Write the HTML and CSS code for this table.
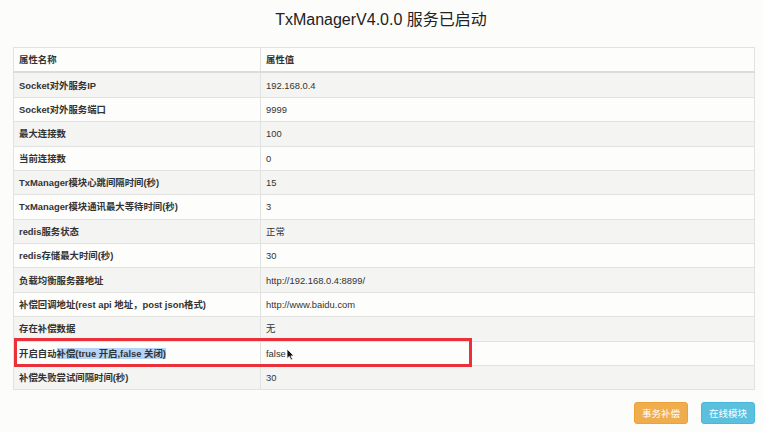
FILE: index.html
```html
<!DOCTYPE html>
<html lang="zh-CN">
<head>
    <meta charset="UTF-8">
    <title>TxManager</title>
    <link rel="stylesheet" href="styles.css">
</head>
<body>
    <h2 class="title">TxManagerV4.0.0 服务已启动</h2>
    <div class="wrap">
        <table class="info">
            <colgroup>
                <col class="col-name">
                <col>
            </colgroup>
            <thead>
                <tr><th>属性名称</th><th>属性值</th></tr>
            </thead>
            <tbody>
                <tr><th>Socket对外服务IP</th><td>192.168.0.4</td></tr>
                <tr><th>Socket对外服务端口</th><td>9999</td></tr>
                <tr><th>最大连接数</th><td>100</td></tr>
                <tr><th>当前连接数</th><td>0</td></tr>
                <tr><th>TxManager模块心跳间隔时间(秒)</th><td>15</td></tr>
                <tr><th>TxManager模块通讯最大等待时间(秒)</th><td>3</td></tr>
                <tr><th>redis服务状态</th><td>正常</td></tr>
                <tr><th>redis存储最大时间(秒)</th><td>30</td></tr>
                <tr><th>负载均衡服务器地址</th><td>http://192.168.0.4:8899/</td></tr>
                <tr><th>补偿回调地址(rest api 地址，post json格式)</th><td>http://www.baidu.com</td></tr>
                <tr><th>存在补偿数据</th><td>无</td></tr>
                <tr><th>开启自动<span class="sel">补偿(true 开启,false 关闭)</span></th><td>false</td></tr>
                <tr><th>补偿失败尝试间隔时间(秒)</th><td>30</td></tr>
            </tbody>
        </table>
        <div class="mark"></div>
        <svg class="cursor" width="9" height="13" viewBox="0 0 9 13">
            <path d="M1 1 L1 10.5 L3.3 8.5 L5 12 L6.6 11.3 L4.9 7.9 L8 7.9 Z" fill="#111" stroke="#fff" stroke-width="0.8"/>
        </svg>
    </div>
    <div class="actions">
        <button class="btn btn-warning">事务补偿</button>
        <button class="btn btn-info">在线模块</button>
    </div>
</body>
</html>
```

FILE: styles.css
```css
body {
    margin: 0;
    background: #fcfcfa;
    font-family: "Liberation Sans", Arial, "Noto Sans CJK SC", sans-serif;
    color: #333;
}
.title {
    margin: 0;
    padding: 10px 0 0;
    height: 37px;
    box-sizing: border-box;
    text-align: center;
    font-size: 16px;
    line-height: 20px;
    font-weight: normal;
    color: #222;
}
.wrap {
    position: relative;
    margin: 10px 7px 0 13px;
}
.info {
    width: 100%;
    table-layout: fixed;
    border-collapse: collapse;
    background: #fdfdfb;
    border: 1px solid #e2e2e0;
    font-size: 9.4px;
    line-height: 13px;
}
.col-name {
    width: 247px;
}
.info th,
.info td {
    border: 1px solid #e2e2e0;
    padding: 5.2px 5px;
    text-align: left;
    vertical-align: top;
    white-space: nowrap;
}
.info th {
    font-weight: bold;
}
.info thead th {
    border-bottom: 2px solid #dcdcda;
}
.info tbody tr:nth-child(odd) {
    background: #f4f4f2;
}
.sel {
    background: #b4d3f7;
}
.mark {
    position: absolute;
    left: 1px;
    top: 291px;
    width: 452px;
    height: 23px;
    border: 3px solid #ea3038;
}
.cursor {
    position: absolute;
    left: 273px;
    top: 301px;
}
.actions {
    display: flex;
    justify-content: flex-end;
    gap: 13px;
    margin: 12px 7px 0 0;
}
.btn {
    font-family: "Liberation Sans", "Noto Sans CJK SC", sans-serif;
    font-size: 9.5px;
    color: white;
    border: 1px solid transparent;
    border-radius: 3px;
    padding: 0 7px;
    height: 22px;
    white-space: nowrap;
}
.btn-warning {
    background: #f0ad4e;
    border-color: #eea236;
}
.btn-info {
    background: #5bc0de;
    border-color: #46b8da;
}
```
